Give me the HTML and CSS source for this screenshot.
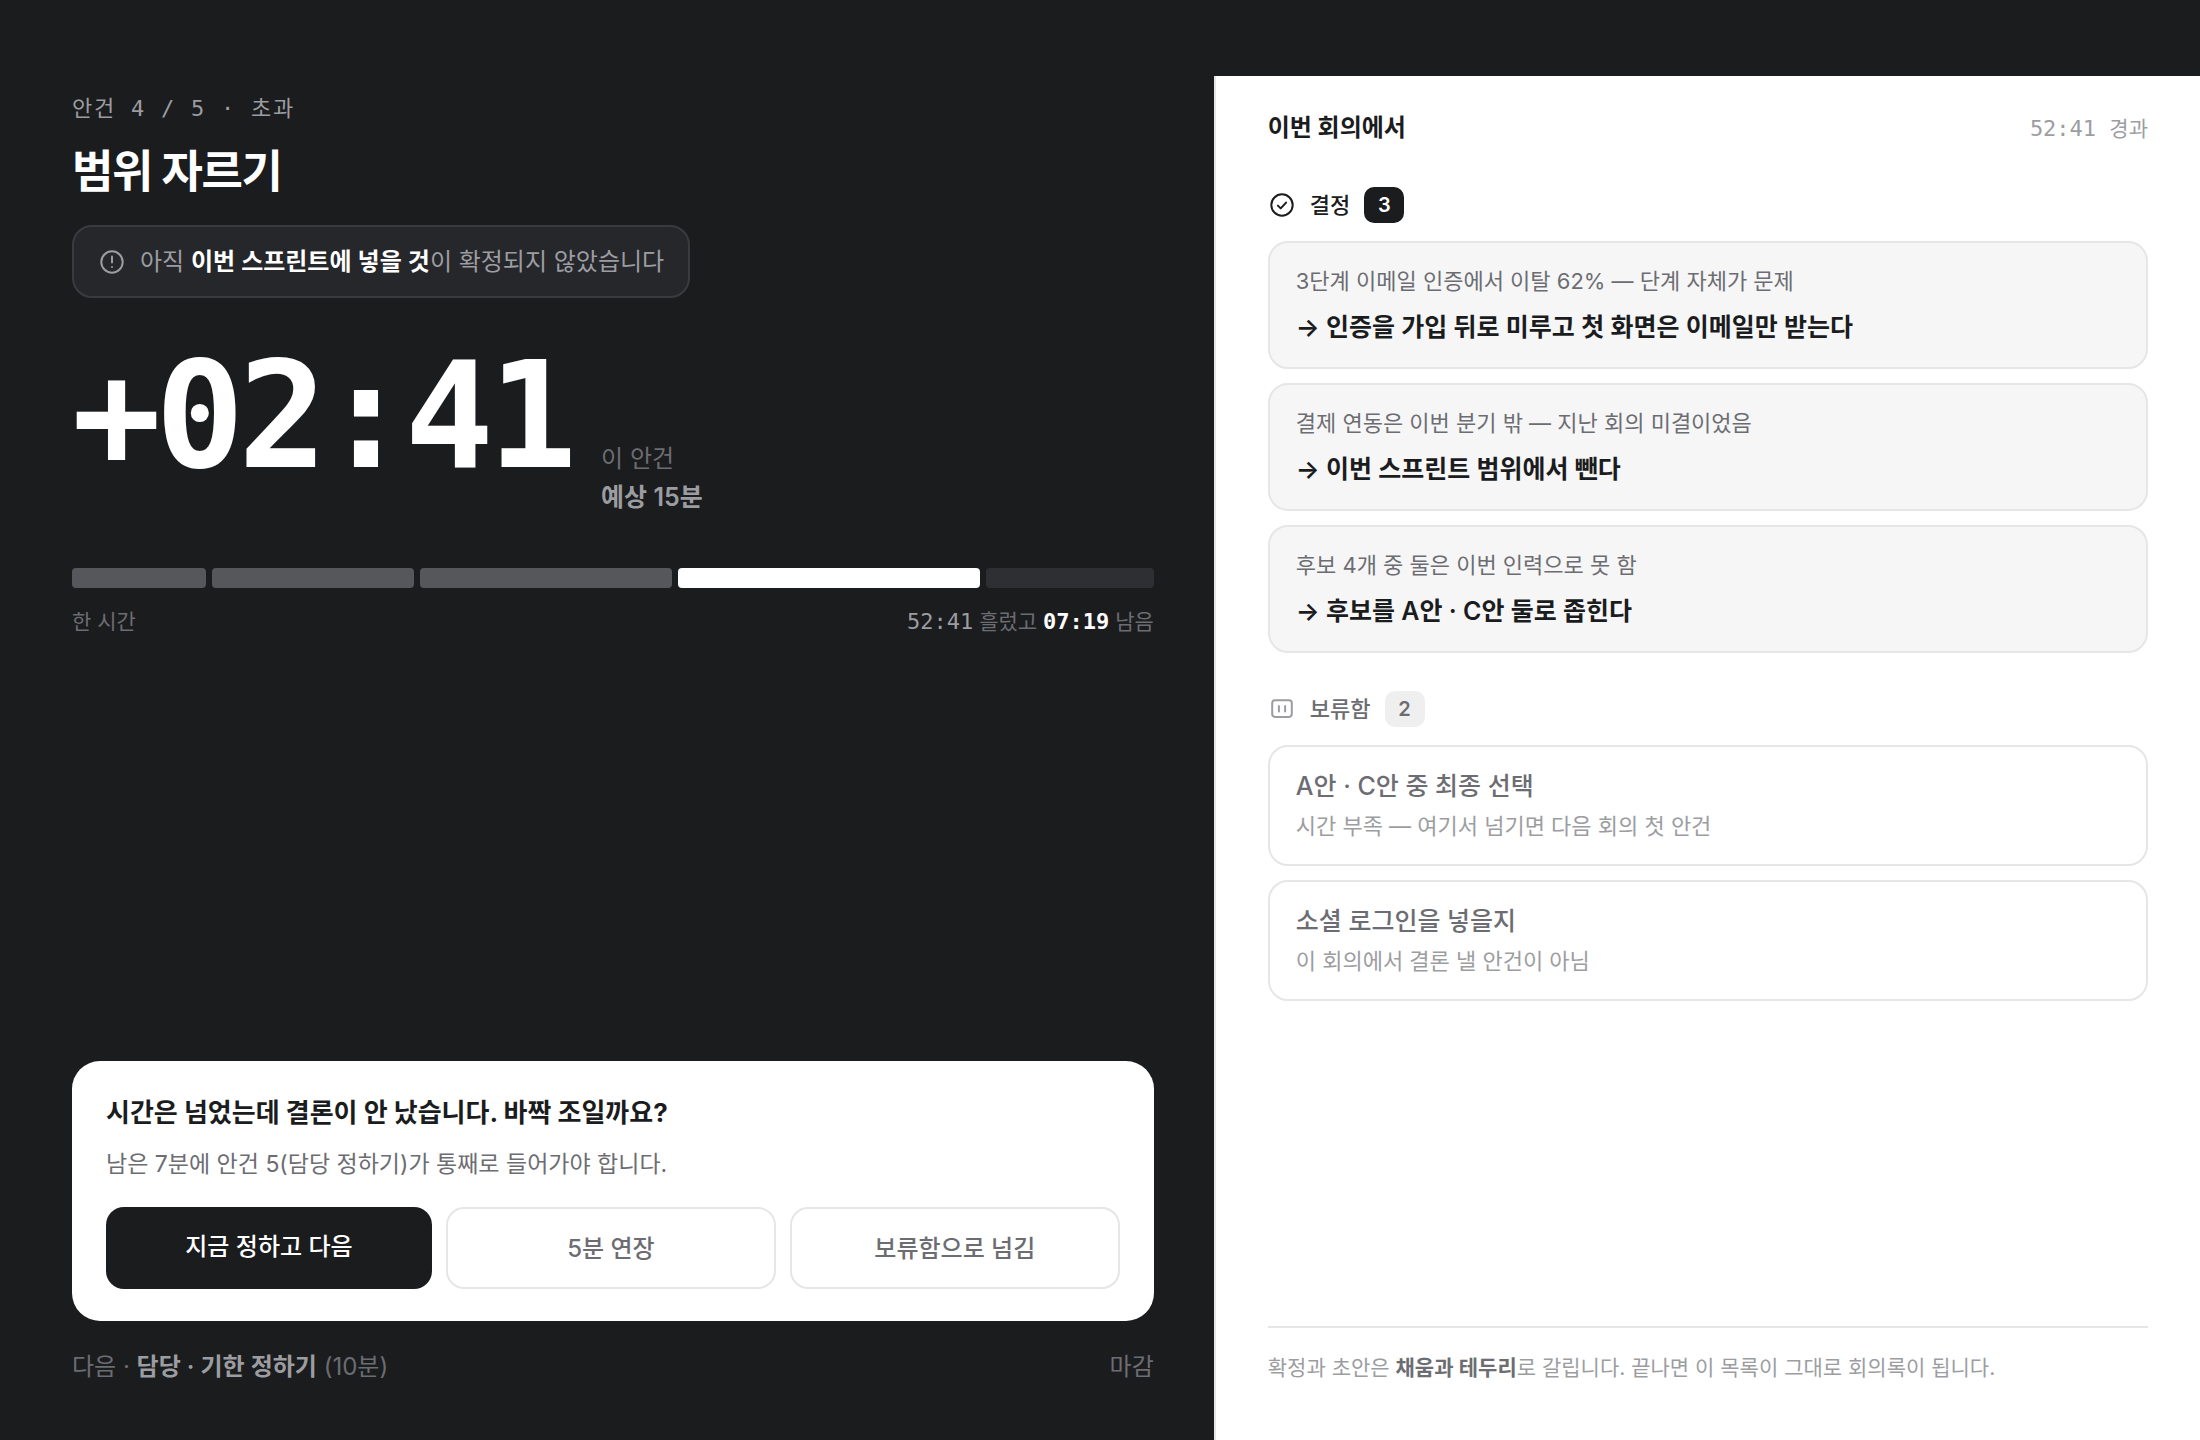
FILE: index.html
```html
<!DOCTYPE html>
<html lang="ko">
<head>
<meta charset="utf-8">
<meta name="viewport" content="width=device-width, initial-scale=1">
<title>범위 자르기</title>
<link rel="stylesheet" href="styles.css">
</head>
<body>
<div class="app">
  <main class="stage">
    <p class="eyebrow">안건 4 / 5 · 초과</p>
    <h1 class="title">범위 자르기</h1>
    <p class="notice">
      <svg class="icon" viewBox="0 0 28 28" fill="none" stroke="currentColor" stroke-width="2" stroke-linecap="round" aria-hidden="true"><circle cx="14" cy="14" r="10.7"/><path d="M14 8.600v6M14 18.900v.2"/></svg>
      <span>아직 <strong>이번 스프린트에 넣을 것</strong>이 확정되지 않았습니다</span>
    </p>
    <div class="clock">
      <span class="time">+02:41</span>
      <span class="planned">이 안건<br><strong>예상 15분</strong></span>
    </div>
    <div class="track">
      <span class="seg done" style="flex-grow:8"></span>
      <span class="seg done" style="flex-grow:12"></span>
      <span class="seg done" style="flex-grow:15"></span>
      <span class="seg now" style="flex-grow:18"></span>
      <span class="seg" style="flex-grow:10"></span>
    </div>
    <div class="track-note">
      <span>한 시간</span>
      <span><span class="mono spent">52:41</span> 흘렀고 <strong class="mono left">07:19</strong> 남음</span>
    </div>
    <section class="prompt">
      <h2 class="prompt-title">시간은 넘었는데 결론이 안 났습니다. 바짝 조일까요?</h2>
      <p class="prompt-text">남은 7분에 안건 5(담당 정하기)가 통째로 들어가야 합니다.</p>
      <div class="actions">
        <button class="btn primary" type="button">지금 정하고 다음</button>
        <button class="btn" type="button">5분 연장</button>
        <button class="btn" type="button">보류함으로 넘김</button>
      </div>
    </section>
    <footer class="next">
      <span>다음 · <strong>담당 · 기한 정하기</strong> (10분)</span>
      <span>마감</span>
    </footer>
  </main>
  <aside class="log">
    <header class="log-head">
      <h2 class="log-title">이번 회의에서</h2>
      <span class="mono elapsed">52:41 <span class="unit">경과</span></span>
    </header>
    <section>
      <h3 class="group decided">
        <svg class="icon" viewBox="0 0 28 28" fill="none" stroke="currentColor" stroke-width="2" stroke-linecap="round" stroke-linejoin="round" aria-hidden="true"><circle cx="14" cy="14" r="10.7"/><path d="M9.900 14.600l2.800 2.800 5.400-5.800"/></svg>
        결정 <span class="count">3</span>
      </h3>
      <ul class="cards">
        <li class="card filled"><p class="why">3단계 이메일 인증에서 이탈 62% — 단계 자체가 문제</p><p class="what">→ 인증을 가입 뒤로 미루고 첫 화면은 이메일만 받는다</p></li>
        <li class="card filled"><p class="why">결제 연동은 이번 분기 밖 — 지난 회의 미결이었음</p><p class="what">→ 이번 스프린트 범위에서 뺀다</p></li>
        <li class="card filled"><p class="why">후보 4개 중 둘은 이번 인력으로 못 함</p><p class="what">→ 후보를 A안 · C안 둘로 좁힌다</p></li>
      </ul>
    </section>
    <section>
      <h3 class="group parked">
        <svg class="icon" viewBox="0 0 28 28" fill="none" stroke="currentColor" stroke-width="2" stroke-linecap="round" aria-hidden="true"><rect x="4.200" y="5.300" width="19.600" height="16.600" rx="2.800"/><path d="M10.900 11v5.400M17.100 11v5.400"/></svg>
        보류함 <span class="count">2</span>
      </h3>
      <ul class="cards">
        <li class="card"><p class="topic">A안 · C안 중 최종 선택</p><p class="reason">시간 부족 — 여기서 넘기면 다음 회의 첫 안건</p></li>
        <li class="card"><p class="topic">소셜 로그인을 넣을지</p><p class="reason">이 회의에서 결론 낼 안건이 아님</p></li>
      </ul>
    </section>
    <footer class="legend">확정과 초안은 <strong>채움과 테두리</strong>로 갈립니다. 끝나면 이 목록이 그대로 회의록이 됩니다.</footer>
  </aside>
</div>
</body>
</html>
```
FILE: styles.css
```css
* { box-sizing: border-box; margin: 0; padding: 0; }

body {
  background: #1b1c1e;
  color: #1b1c1e;
  font-family: Inter, "Noto Sans CJK KR", sans-serif;
  font-size: 24px;
  line-height: 38px;
}

ul { list-style: none; }

.app {
  display: grid;
  grid-template-columns: minmax(0, 16fr) minmax(0, 13fr);
  min-height: 100vh;
  padding-top: 76px;
}

.mono, .eyebrow, .time { font-family: "DejaVu Sans Mono", "Noto Sans CJK KR", monospace; }

.icon { flex: none; width: 28px; height: 28px; }

/* Running agenda item */
.stage {
  display: flex;
  flex-direction: column;
  padding: 16px 60px 54px 72px;
  color: #6c6d72;
}

.eyebrow { font-size: 22px; line-height: 34px; letter-spacing: 0.08em; color: #9c9da1; }

.title { margin-top: 16px; font-size: 45px; line-height: 60px; font-weight: 700; letter-spacing: -0.03em; color: #fff; }

.notice {
  display: flex;
  align-items: center;
  align-self: flex-start;
  gap: 14px;
  margin-top: 23px;
  padding: 16px 24px;
  border: 2px solid #3a3b3f;
  border-radius: 20px;
  background: #26272b;
  color: #9c9da1;
  line-height: 37px;
}
.notice strong { font-weight: 600; color: #fff; }

.clock { display: flex; align-items: baseline; gap: 30px; margin-top: 44px; }
.time { font-size: 148px; line-height: 148px; font-weight: 700; letter-spacing: -0.04em; color: #fff; }
.planned { line-height: 39px; }
.planned strong { font-size: 25px; font-weight: 600; color: #9c9da1; }

.track { display: flex; gap: 6px; margin-top: 51px; }
.seg { flex: 1 1 0; height: 20px; border-radius: 4px; background: #2e2f33; }
.seg.done { background: #56575b; }
.seg.now { background: #fff; }

.track-note { display: flex; justify-content: space-between; margin-top: 16px; font-size: 21px; line-height: 36px; }
.mono { font-size: 22px; }
.spent { color: #9c9da1; }
.left { font-weight: 700; color: #fff; }

.prompt { margin-top: auto; padding: 32px 34px; border-radius: 28px; background: #fff; color: #1b1c1e; }
.prompt-title { font-size: 26px; line-height: 40px; font-weight: 700; }
.prompt-text { margin-top: 13px; line-height: 36px; font-size: 23px; color: #6c6d72; }

.actions { display: flex; gap: 14px; margin-top: 25px; }
.btn {
  box-sizing: content-box;
  flex: 1 1 0;
  padding: 21px 0 19px;
  border: 2px solid #e6e6e7;
  border-radius: 18px;
  background: #fff;
  color: #6c6d72;
  font: 500 24px/38px Inter, "Noto Sans CJK KR", sans-serif;
  cursor: pointer;
}
.btn.primary { padding: 21px 0 23px; border: 0; background: #1b1c1e; color: #fff; }

.next { display: flex; justify-content: space-between; margin-top: 27px; }
.next strong { font-weight: 600; color: #9c9da1; }

/* Meeting record */
.log {
  display: flex;
  flex-direction: column;
  padding: 33px 52px 54px;
  border-left: 2px solid #e6e6e7;
  background: #fff;
}

.log-head { display: flex; align-items: baseline; justify-content: space-between; line-height: 38px; }
.log-title { font-size: 24px; font-weight: 700; }
.elapsed { line-height: 32px; color: #9c9da1; }
.unit { font-size: 21px; }

.group { display: flex; align-items: center; gap: 14px; margin-top: 40px; font-size: 22px; line-height: 36px; font-weight: 500; }
.group.parked { margin-top: 38px; color: #6c6d72; }
.parked .icon { color: #9c9da1; }
.count { min-width: 40px; border-radius: 10px; background: #1b1c1e; color: #fff; font-size: 20px; font-weight: 600; text-align: center; }
.parked .count { background: #efeff0; color: #6c6d72; }

.cards { display: grid; gap: 14px; margin-top: 18px; }
.card { padding: 20px 26px; border: 2px solid #e6e6e7; border-radius: 20px; }
.card.filled { background: #f6f6f7; }
.why { font-size: 22px; line-height: 36px; color: #6c6d72; }
.what { margin-top: 8px; font-size: 25px; line-height: 40px; font-weight: 600; }
.topic { font-size: 25px; line-height: 38px; font-weight: 500; color: #6c6d72; }
.reason { margin-top: 3px; font-size: 22px; line-height: 36px; color: #9c9da1; }

.legend { margin-top: auto; padding-top: 22px; border-top: 2px solid #e6e6e7; font-size: 21px; line-height: 36px; color: #9c9da1; }
.legend strong { font-weight: 600; color: #6c6d72; }
```
